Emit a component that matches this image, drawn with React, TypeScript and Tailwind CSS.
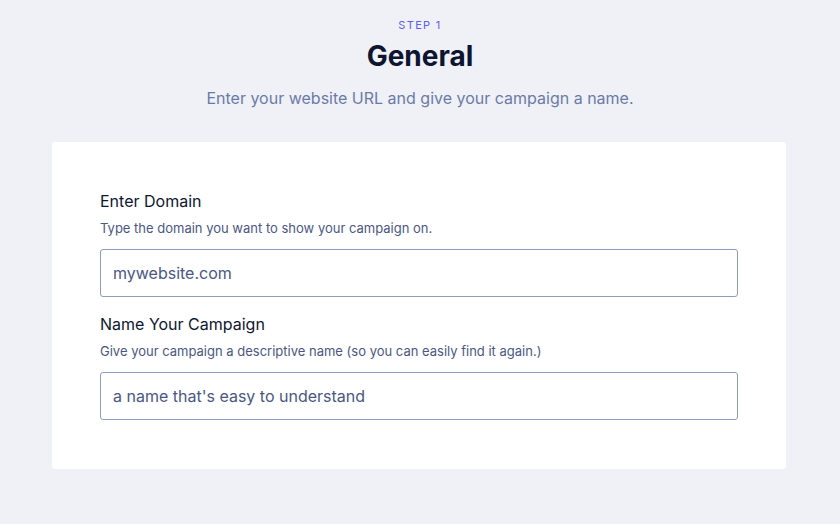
import React from "react";

const font = { fontFamily: "Inter, 'Noto Sans', sans-serif" };

function Field({ label, desc, placeholder }: { label: string; desc: string; placeholder: string }) {
  return (
    <div className="flex flex-col">
      <div className="text-[16px] leading-[20px] text-[#0f1630]">{label}</div>
      <div className="mt-[9px] text-[13px] leading-[16px] text-[#4b5783]">{desc}</div>
      <div className="mt-[13px] h-[48px] rounded-[3px] border border-[#8f9cc2] bg-white flex items-center px-[12px] text-[16px] text-[#4b5783]">
        {placeholder}
      </div>
    </div>
  );
}

export default function App() {
  return (
    <div className="w-[840px] h-[524px] bg-[#f0f1f7] flex flex-col items-center" style={font}>
      <div className="mt-[18px] text-[11px] leading-[14px] tracking-[0.12em] text-[#5a5ef2]">STEP 1</div>
      <div className="mt-[7px] text-[28px] leading-[34px] font-bold text-[#0d1530]">General</div>
      <div className="mt-[15px] text-[16px] leading-[20px] text-[#6b7ba8]">
        Enter your website URL and give your campaign a name.
      </div>
      <div className="mt-[34px] self-start ml-[52px] w-[734px] h-[327px] bg-white rounded-[3px] px-[48px] pt-[49px] flex flex-col gap-[17px]">
        <Field label="Enter Domain" desc="Type the domain you want to show your campaign on." placeholder="mywebsite.com" />
        <Field
          label="Name Your Campaign"
          desc="Give your campaign a descriptive name (so you can easily find it again.)"
          placeholder="a name that's easy to understand"
        />
      </div>
    </div>
  );
}
